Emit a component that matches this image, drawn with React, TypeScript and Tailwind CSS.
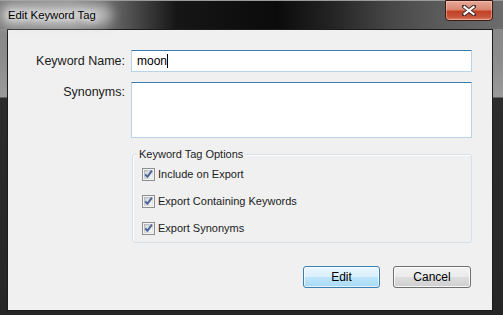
import React from "react";

function CheckBox() {
  return (
    <svg width="13" height="13" viewBox="0 0 13 13" className="shrink-0">
      <defs>
        <linearGradient id="cbOuter" x1="0" y1="0" x2="1" y2="1">
          <stop offset="0" stopColor="#b0b4ba" />
          <stop offset="1" stopColor="#eeeeef" />
        </linearGradient>
        <linearGradient id="cbInner" x1="0" y1="0" x2="1" y2="1">
          <stop offset="0" stopColor="#cdd1d6" />
          <stop offset="1" stopColor="#f7f7f7" />
        </linearGradient>
      </defs>
      <rect x="0.5" y="0.5" width="12" height="12" fill="#f4f4f4" stroke="#8e8f8f" />
      <rect x="2" y="2" width="9" height="9" fill="url(#cbOuter)" />
      <rect x="3" y="3" width="7" height="7" fill="url(#cbInner)" />
      <path
        d="M3.2 6.4 L5.4 8.9 L9.9 2.6"
        fill="none"
        stroke="#4b6395"
        strokeWidth="1.9"
        strokeLinejoin="round"
      />
    </svg>
  );
}

function CheckRow({ label }: { label: string }) {
  return (
    <label className="flex items-center gap-[3px] h-[15px] text-[11px] leading-[15px] text-[#1b1b1b]">
      <CheckBox />
      <span>{label}</span>
    </label>
  );
}

export default function App() {
  return (
    <div className="w-[503px] h-[315px] overflow-hidden bg-[linear-gradient(to_bottom,#858585_0px,#8c8c8c_60px,#9a9a9a_97px,#2c2c2c_98px,#262626_100%)] font-['Liberation_Sans',Arial,sans-serif]">
      {/* title bar */}
      <div className="relative h-[29px] bg-[linear-gradient(to_right,#7c7c7c_0%,#888888_14%,#5c5c5c_24%,#161616_35%,#0b0b0b_55%,#242424_66%,#484848_78%,#5c5c5c_88%,#6c6c6c_100%)] border-t border-[#9a9a9a]">
        {/* aero glow behind caption */}
        <div className="absolute left-[0px] top-[3px] w-[112px] h-[22px] rounded-[11px] bg-[#d8d8d8]/70 blur-[6px]" />
        <span className="absolute left-[8px] top-[7px] text-[11.3px] leading-[14px] text-black [text-shadow:0_0_6px_#fff,0_0_10px_#fff]">
          Edit Keyword Tag
        </span>
        <div className="absolute left-[445px] top-[-1px] w-[48px] h-[21px] rounded-b-[4px] border border-[#3a1a14] bg-[linear-gradient(to_bottom,#e6a999_0%,#d98770_45%,#c24226_55%,#c8553b_85%,#e08a6c_100%)] shadow-[inset_0_0_0_1px_rgba(255,210,200,0.45)] flex items-center justify-center">
          <svg width="14" height="11" viewBox="0 0 14 11">
            <path
              d="M2 1.5 L12 9.5 M12 1.5 L2 9.5"
              stroke="#3b2a28"
              strokeWidth="4"
              strokeLinecap="square"
            />
            <path
              d="M2.5 2 L11.5 9 M11.5 2 L2.5 9"
              stroke="#ffffff"
              strokeWidth="2.2"
              strokeLinecap="square"
            />
          </svg>
        </div>
      </div>

      {/* client area */}
      <div className="ml-[7px] w-[486px] h-[282px] border border-[#1c1c1c] bg-[#f0f0f0] flex flex-col pt-[20px] pr-[20px]">
        <div className="flex items-center h-[22px]">
          <div className="w-[117px] text-right text-[12.5px] leading-[15px] text-[#1b1b1b]">
            Keyword Name:
          </div>
          <div className="ml-[6px] w-[341px] h-[22px] bg-white border border-[#b9d3ea] border-t-[#3d7bad] flex items-center pl-[5px] text-[12px] text-black">
            <span>moon</span>
            <span className="w-px h-[14px] bg-black" />
          </div>
        </div>

        <div className="flex mt-[10px]">
          <div className="w-[117px] pt-[3px] text-right text-[12.5px] leading-[15px] text-[#1b1b1b]">
            Synonyms:
          </div>
          <div className="ml-[6px] w-[341px] h-[56px] bg-white border border-[#b9d3ea] border-t-[#3d7bad]" />
        </div>

        <fieldset className="ml-[124px] mt-[8px] w-[340px] border border-[#d5dfe5] rounded-[3px] pl-[9px] pt-[5px] pb-[6px] flex flex-col gap-[12px] shadow-[inset_1px_1px_0_#fff]">
          <legend className="-ml-[5px] px-[2px] text-[11px] leading-[16px] text-[#1b1b1b]">
            Keyword Tag Options
          </legend>
          <CheckRow label="Include on Export" />
          <CheckRow label="Export Containing Keywords" />
          <CheckRow label="Export Synonyms" />
        </fieldset>

        <div className="mt-[23px] flex justify-end gap-[13px] pr-[1px]">
          <button className="w-[77px] h-[22px] rounded-[3px] border border-[#3c7fb1] bg-[linear-gradient(to_bottom,#eaf6fd_0%,#d9f0fc_50%,#bee6fd_51%,#a7d9f5_100%)] shadow-[inset_0_0_0_1px_rgba(255,255,255,0.7)] text-[12px] text-black">
            Edit
          </button>
          <button className="w-[78px] h-[22px] rounded-[3px] border border-[#707070] bg-[linear-gradient(to_bottom,#f2f2f2_0%,#ebebeb_50%,#dddddd_51%,#cfcfcf_100%)] shadow-[inset_0_0_0_1px_rgba(255,255,255,0.8)] text-[12px] text-black">
            Cancel
          </button>
        </div>
      </div>
    </div>
  );
}
